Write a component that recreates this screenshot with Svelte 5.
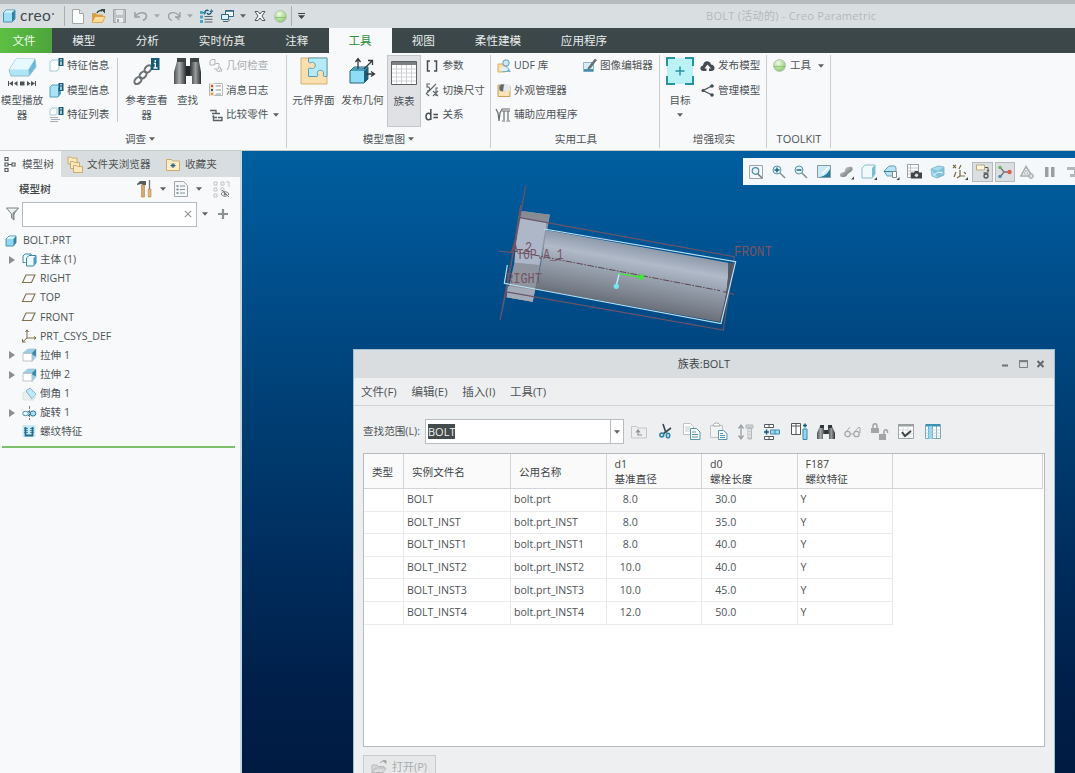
<script>
  const T = '#2b7f9c';
  // name: [width, height, svg body]
  const icons = {
    cube: [14, 14, '<path d="M1.500 3.500L4 1h9v9l-3 3H1.500z" fill="#9edff5" stroke="#4b93b0"/><path d="M2 3.500L4 1.500h8.500L10 3.500z" fill="#e0f6fd"/><path d="M10 3.500l2.800-2.300v8.600L10 12.500z" fill="#2e7fa0"/>'],
    page: [12, 15, '<path d="M.5.500h7l4 4v10H.5z" fill="#fff" stroke="#a2a7aa"/><path d="M7.500.500v4h4" fill="#e4e7e9" stroke="#a2a7aa"/>'],
    folder: [15, 15, '<path d="M1 13V4h4l1 1.500h6V13z" fill="#d9a04c"/><path d="M1 13.500L4 7.500h10l-2.500 6z" fill="#ffdc98" stroke="#d49a45" stroke-width=".8"/><path d="M6 4c1-2 3-3 5-2" fill="none" stroke="#3a4446" stroke-width="1.500"/><path d="M9.500 0H14v4.500z" fill="#3a4446"/>'],
    folderOff: [17, 14, '<path d="M1 12.500V5h5l1 1.500h6V8M1 12.500L4 8h11l-3 4.500z" fill="#d8dadb" stroke="#b6b9bb"/><path d="M9 3c1-1.500 3-2 5-1" fill="none" stroke="#aaa"/><path d="M12 .500h3v3z" fill="#999" stroke="#aaa"/>'],
    save: [13, 14, '<path d="M.5.500h12v13H.5z" fill="#bfc3c5" stroke="#9fa4a6"/><path d="M3 .800h7v5H3z" fill="#e2e5e6"/><path d="M3 9h7v4.500H3z" fill="#eef0f0"/><path d="M4 10h2v3H4z" fill="#9fa4a6"/>'],
    undo: [14, 12, '<path d="M1 2v5h5M1.500 6.500C4 2 12 1 12.500 6c0 2-1 3.500-3.500 4.500" fill="none" stroke="#9a9fa1" stroke-width="1.500"/>'],
    redo: [14, 12, '<path d="M13 2v5H8M12.500 6.500C10 2 2 1 1.500 6c0 2 1 3.500 3.500 4.500M9 7l3.500 3" fill="none" stroke="#9a9fa1" stroke-width="1.300"/>'],
    regen: [14, 14, `<path d="M5.500 7.500h8M5.500 10.300h8M5.500 13h8" stroke="#59666a"/><path d="M1 2h3v3H1zM1 6.500h3v3H1zM1 11h3v3H1z" fill="#4ba3c6"/><path d="M5.500 4C6 1 8 .500 9.500 2M8 4c1 2 4 1.500 4.500-1.500" fill="none" stroke="#174f66" stroke-width="1.300"/><path d="M10.500 3l2-3 2 3zM3.500 3h4l-2 3z" fill="${T}"/>`],
    windows: [14, 14, '<path d="M5.500 1.500h8v6h-8z" fill="#fff" stroke="#2d6a86"/><path d="M5.500 2h8" stroke="#2d6a86" stroke-width="1.500"/><path d="M1.500 5.500h7v5h-7z" fill="#dff3fb" stroke="#2d6a86"/><path d="M3 12.500h5l2-2" fill="none" stroke="#5a6265"/>'],
    closeWin: [12, 10, '<path d="M1 .500h3L6 3 8 .500h3L8 5l3 4.500H8L6 7 4 9.500H1L4 5z" fill="#f4f6f6" stroke="#53595b"/>'],
    sphere: [13, 13, '<circle cx="6.500" cy="6.500" r="6" fill="url(#sph)" stroke="#b0bbae" stroke-width=".8"/><path d="M1 7.500h11" stroke="#7fb569" stroke-width=".7"/>'],
    down: [6, 4, '<path d="M0 .300h6L3 3.800z" fill="#5c6264"/>'],
    downOff: [6, 4, '<path d="M0 .300h6L3 3.800z" fill="#a4a8aa"/>'],
    menuDown: [7, 6, '<path d="M0 0h7v1H0zM0 2.300h7L3.500 6z" fill="#3e4547"/>'],
    player: [29, 32, '<path d="M1 13L8 2h19l1 8-7 9H3z" fill="#b0e5f6" stroke="#7fb5ca" stroke-width=".8"/><path d="M1.500 12.500L8 2h18.500l-6 10.500z" fill="#e6f9fe"/><path d="M20.500 12.500L27 2.500l.5 7.500-6.500 8.500z" fill="#6fb9d5"/><path d="M0 24h1v5H0zM1 26.500L5 24v5zM6 26.500L9.500 24v5zM12 24.500h4.500v4H12zM19 24l3.500 2.500L19 29zM23 24l4 2.500-4 2.500zM27 24h1v5h-1z" fill="#4c5254"/>'],
    featInfo: [15, 15, '<path d="M1 4l2-2h7v8l-2 3H1z" fill="#fff" stroke="#a3cbdb"/><path d="M9.500 0h5v8h-5z" fill="#135c78"/><path d="M12 1v1.500M12 3.500V7" stroke="#fff" stroke-width="1.300"/>'],
    modelInfo: [15, 15, '<path d="M1 4l2-2h8v8l-2 4H1z" fill="#a9e3f8" stroke="#5aa0bb"/><path d="M9 5v9l3-3V3z" fill="#4b9ec0"/><path d="M9.500 0h5v8h-5z" fill="#135c78"/><path d="M12 1v1.500M12 3.500V7" stroke="#fff" stroke-width="1.300"/>'],
    featList: [15, 15, '<path d="M1 3l2-2h5v6l-2 1H1z" fill="#fff" stroke="#a3cbdb"/><path d="M1 10.500h8M2 12.500h9M1 14.500h8" stroke="#a5acaf"/><path d="M9.500 0h5v8h-5z" fill="#135c78"/><path d="M12 1v1.500M12 3.500V7" stroke="#fff" stroke-width="1.300"/>'],
    chain: [27, 30, '<g fill="none" stroke="#6a7073" stroke-width="2"><ellipse cx="5" cy="23.500" rx="4.200" ry="2.800" transform="rotate(-45 5 23.500)"/><ellipse cx="10" cy="18" rx="4.200" ry="2.800" transform="rotate(-45 10 18)"/><ellipse cx="15" cy="12" rx="4.200" ry="2.800" transform="rotate(-50 15 12)"/></g><path d="M18 1h8.500v12H18z" fill="#135c78"/><path d="M22.300 3v2M20.800 6.300h1.500V11M20.500 11h4" stroke="#fff" stroke-width="1.300" fill="none"/>'],
    binoc: [28, 28, '<path d="M3 4h3V2h4v2h2v6h4V4h2V2h4v2h3l2 11v12h-9v-8h-6v8H0V15z" fill="url(#bin)"/><path d="M3 1h9v4H3zM16 1h9v4h-9z" fill="#3f4446"/><path d="M12 9h4v9h-4z" fill="#26292a"/>'],
    binocS: [18, 17, '<path d="M3 3h3v1h1v3h4V4h1V3h3l3 7v6h-6v-5H6v5H0v-6z" fill="url(#bin)"/><path d="M3 2h4v3H3zM11 2h4v3h-4z" fill="#33383a"/>'],
    geomOff: [14, 14, '<g fill="none" stroke="#b3b7ba"><path d="M1 2l2-1.500h3V4L5 6H1zM5 6l2-1.500h3V8l-1 2H5M10 8l2 1-2 4-3-2M12 13l1-3"/></g>'],
    msg: [14, 14, '<path d="M.5.500h13v12H.5z" fill="#fff" stroke="#b4b9bb"/><path d="M1 0h4v13H1z" fill="#f1dfc7"/><path d="M2 2h2v2H2z" fill="#c54b3c"/><path d="M2 6h2v2H2z" fill="#245e78"/><path d="M2 10h2v2H2z" fill="#d9953d"/><path d="M6.500 3H12M6.500 7H12M6.500 11H12" stroke="#8d9497"/>'],
    compare: [14, 14, '<path d="M1 2.500h6v3h4M7 5.500H3M5 7.500L3.500 9M8 9.500H4.500v3H13V9.500H9" fill="none" stroke="#5a6063" stroke-width="1.300"/>'],
    puzzle: [28, 28, '<path d="M1 1h26v26H1z" fill="#f9dfae" stroke="#d4af72"/><path d="M8.500 1v4c1 1 2 1 3 .500 5-1.500 5 7 0 6-1-.500-3-.500-3 .500v7.500h7.500c2 0 2-1 1.500-2.500-1.500-5 7-5 6 0-.500 2 0 2.500 1 2.500h2.500V1z" fill="#b5eaf8" stroke="#5a9db5"/>'],
    publish: [27, 28, '<path d="M1 14l4-4h14v12l-4 4H1z" fill="#8edcf5" stroke="#28647d"/><path d="M1.500 14L5 10.500h13.500L15 14z" fill="#4c9dba"/><path d="M15 14l4-4v12l-4 4z" fill="#1c5f7c"/><path d="M9 12V2M6.500 5L9 1.500 11.500 5M15 12l8-8M19 3.500h4.500V8M17 17h8M22 14.500l3.500 2.500-3.500 2.500" stroke="#33393b" stroke-width="1.300" fill="none"/>'],
    grid: [26, 24, '<path d="M.5.500h25v23H.5z" fill="#fff" stroke="#5c6264"/><path d="M1 1h24v3H1z" fill="#7b8183"/><path d="M5.500 4v19M10.500 4v19M15.500 4v19M20.500 4v19M1 8h24M1 12h24M1 16h24M1 20h24" stroke="#c3c7c9" stroke-width=".8"/>'],
    brackets: [13, 12, '<path d="M4 1H1.500v10H4M8 1h2.500v10H8" fill="none" stroke="#474d4f" stroke-width="1.500"/>'],
    swap: [14, 14, '<path d="M5 1H2v3c3-1 4 4 0 4M1 11L11 1M1 10l3 3M11 13V5h2M8 8l5 5M13 8l-5 5" fill="none" stroke="#5f6668" stroke-width="1.100"/>'],
    dEq: [14, 12, '<path d="M5.800 0v11M5.800 6C5 3.500 1 3.500 1 7.500s4 4 4.800 1.500M8.500 5.500H13M8.500 8.500H13" fill="none" stroke="#474d4f" stroke-width="1.500"/>'],
    udf: [14, 14, '<path d="M1 5h7v8H1z" fill="#fbdca3" stroke="#d9b16a"/><circle cx="9" cy="4" r="3.200" fill="#cfe9f4" stroke="#5f9ab4"/><path d="M5 13l4.500-7L14 13z" fill="#7eb3ca"/><ellipse cx="7" cy="10" rx="4" ry="2" fill="#dff2fa"/>'],
    appear: [14, 14, '<path d="M1 2h4l1 1h7v10.500H1z" fill="#f5d69c" stroke="#c9a062"/><circle cx="6" cy="5" r="3.800" fill="#63696c"/><path d="M7 1.500h6v7H6z" fill="#e6e9ea"/><path d="M2 8.500h10v4.500H2z" fill="#fbe3b5"/>'],
    util: [15, 14, '<path d="M0 1l2 4 1 8 1-8 2-4M6 1h8M6 3h8M8 3v9M12 3v9M6 13h3M10.500 13H14" fill="none" stroke="#666c6f" stroke-width="1.200"/>'],
    imgEdit: [14, 14, '<path d="M.5 3.500h10v9H.5z" fill="#d5eef7" stroke="#94b6c3"/><path d="M1 10h9v2.500H1z" fill="#4a90ae"/><path d="M5 9l7-9 1.500 1-6 8-2.500 1z" fill="#6c7477" stroke="#4b5356" stroke-width=".6"/>'],
    target: [28, 28, '<path d="M1 1h26v26H1z" fill="#baf2f5"/><path d="M1 9V1h8M19 1h8v8M27 19v8h-8M9 27H1v-8" fill="none" stroke="#2694a0" stroke-width="2"/><path d="M14 9.500v9M9.500 14h9" stroke="#2694a0" stroke-width="1.500"/>'],
    cloud: [15, 12, '<path d="M3.500 11C-.5 11-.5 6 3 5.500 3.500 0 10 0 11 4.500c4 0 5 6 1 6.500H9V8.500h2L7.500 4.500 4.500 8.500h2V11z" fill="#454b4e"/>'],
    share: [13, 13, '<path d="M11 2L2 6.500 11 11" fill="none" stroke="#454b4e" stroke-width="1.200"/><circle cx="11" cy="2" r="1.800" fill="#454b4e"/><circle cx="2" cy="6.500" r="1.500" fill="#454b4e"/><circle cx="11" cy="11" r="1.800" fill="#454b4e"/>'],
    tree: [12, 17, '<path d="M1 1.500h3v3H1zM1 7h3v3H1zM1 12.500h3v3H1zM8 7h3v3H8zM4 8.500h4" fill="none" stroke="#565c5f" stroke-width="1.200"/>'],
    folders: [17, 17, '<g fill="#fde8bb" stroke="#c49c5a" stroke-width=".8"><path d="M1 1h3l1 1h5v6H1z"/><path d="M3.500 5.500h3l1 1h5v6h-9z"/><path d="M6.500 9.500h3l1 1h5v6h-9z"/></g>'],
    favs: [14, 13, '<path d="M.5 1.500h5l1 1.500h7v9.500H.5z" fill="#fdeecb" stroke="#cdaa6c"/><path d="M7 5v5M4.500 7.500h5M5.300 5.800l3.400 3.400M8.700 5.800L5.300 9.200" stroke="#1f627c"/>'],
    hammer: [15, 18, '<path d="M0 4l3-3h6v4H6L4 4 0 5z" fill="#565c5f"/><path d="M4.500 5h3v12h-3z" fill="#dfa868" stroke="#b08147" stroke-width=".6"/><path d="M12.500 0v9" stroke="#70777a" stroke-width="1.300"/><path d="M11.200 9h2.800v8h-2.800z" fill="#e8b677" stroke="#b08147" stroke-width=".6"/>'],
    listDoc: [14, 16, '<path d="M.5.500h9l4 4v11H.5z" fill="#f5f7f8" stroke="#a0a6a9"/><path d="M2.500 5h2M2.500 8.500h2M2.500 12h2" stroke="#5c7c89" stroke-width="1.500"/><path d="M6 5h5M6 8.500h5M6 12h5" stroke="#8e9497"/>'],
    treeOff: [17, 17, '<path d="M1 1h3v3H1zM1 7h3v3H1zM1 13h3v3H1zM8 1h3v3H8zM13 1h3v5M8 7h3v3H8z" fill="none" stroke="#c1c5c7"/><path d="M8 13c2-3 6-3 8 0-2 3-6 3-8 0M9 9l7 7" fill="none" stroke="#777d80"/><circle cx="12" cy="13" r="1.300" fill="#777d80"/>'],
    funnel: [13, 14, '<path d="M.500 1h12L8 7v6L5.500 11V7z" fill="#eef0f1" stroke="#7a8184"/><path d="M8 7v6l-1.500-1V6L11 2z" fill="#868d90"/>'],
    x: [8, 8, '<path d="M.800.800l6.400 6.400M7.200.800L.800 7.200" stroke="#8d9396" stroke-width="1.100"/>'],
    plus: [10, 10, '<path d="M5 0v10M0 5h10" stroke="#8a9093" stroke-width="2.200"/>'],
    expand: [6, 8, '<path d="M0 0l6 4-6 4z" fill="#8a8f91"/>'],
    part: [12, 12, '<path d="M1 4l3-3h7v6.500L8.500 11H1z" fill="#8fd6ef" stroke="#4a92ae"/><path d="M1.500 4L4 1.500h6.500L8 4z" fill="#def5fd"/><path d="M8.500 4L11 1.500v6l-2.500 3z" fill="#3384a5"/>'],
    bodies: [15, 14, '<path d="M3.500 9.500H1V3l2-2h6v1" fill="#eef9fd" stroke="#3a86a4"/><path d="M4.500 5L7 2.500h7V10l-2.500 3h-7z" fill="#eef9fd" stroke="#3a86a4"/><path d="M11.500 5L14 2.500V10l-2.500 3z" fill="#4d9fbf"/>'],
    plane: [14, 10, '<path d="M4 1h9L9.500 8.500h-9z" fill="none" stroke="#80704f" stroke-width="1.100"/>'],
    csys: [15, 14, '<path d="M5 1v8h9M5 9l-4.500 4M3.500 3L5 .800 6.500 3M12 7.500l2 1.500-2 1.500M.5 10v3h3" fill="none" stroke="#7a6b4a"/>'],
    extrude: [15, 14, '<path d="M1 5l5-4h8v8l-4 4.500V5z" fill="#9ad0e5" stroke="#a5c3cf" stroke-width=".7"/><path d="M10 5l4-4v7l-4-1z" fill="#3b88a7"/><path d="M1 5.500h9V13H1z" fill="#fff" stroke="#bcc5c9"/>'],
    chamfer: [15, 14, '<path d="M1 5h4l6 8H1z" fill="#eceff1" stroke="#d3d8da" stroke-width=".6"/><path d="M4 4l4-3 6 6-4 5z" fill="#bdeafa" stroke="#7cb4ca"/><path d="M10 12l4-5v3l-3 4z" fill="#dfe3e5"/>'],
    revolve: [15, 14, '<path d="M7.500 0v14" stroke="#7a8184" stroke-dasharray="3 1"/><ellipse cx="3.500" cy="7.500" rx="2.800" ry="2.200" fill="none" stroke="#438fac"/><ellipse cx="11" cy="7.500" rx="2.800" ry="2.600" fill="#a9def1" stroke="#2f7896"/><path d="M6 5l3 2.500-3 2.500" fill="none" stroke="#2f7896"/>'],
    thread: [14, 13, '<path d="M.500 0h13v12H.5z" fill="#cbe9f5"/><path d="M3.500 2v8.500h7V2" fill="none" stroke="#246e8c" stroke-width="1.800"/><path d="M2 3.500h4M2 5.500h4M2 7.500h4M8 3.500h4M8 5.500h4M8 7.500h4" stroke="#246e8c" stroke-width=".7"/>'],
    zoomFit: [14, 14, '<path d="M.5.500h13v13H.5z" fill="#f5f8fa" stroke="#9ea5a8"/><circle cx="6.500" cy="6" r="3.300" fill="#e5f5fb" stroke="#4f8aa6" stroke-width="1.200"/><path d="M9 9l4 4" stroke="#6c7578" stroke-width="1.500"/>'],
    zoomIn: [14, 14, '<circle cx="5" cy="5" r="4" fill="#def2fa" stroke="#5c93ac"/><path d="M5 2.500v5M2.500 5h5" stroke="#1c607d" stroke-width="1.400"/><path d="M8 8l5 5" stroke="#8a9194" stroke-width="1.600"/>'],
    zoomOut: [14, 14, '<circle cx="5" cy="5" r="4" fill="#def2fa" stroke="#5c93ac"/><path d="M2.500 5h5" stroke="#1c607d" stroke-width="1.400"/><path d="M8 8l5 5" stroke="#8a9194" stroke-width="1.600"/>'],
    repaint: [14, 13, '<path d="M.5.500h13v12H.5z" fill="#cdebf6" stroke="#829ba4"/><path d="M13 4v8H3C8 11 11 8 13 4z" fill="#2a7c9a"/><path d="M5 9l7-7" stroke="#fff" stroke-width="1.200"/>'],
    shade: [16, 16, '<path d="M1 11c0-4 5-1 5-5 0-3 4-4 7-3 2 3-1 5-3 6s-2 4-5 4c-3 0-4 0-4-2z" fill="url(#shd)"/><path d="M15 12.500v3h-3z" fill="#444"/>'],
    saved: [16, 16, '<path d="M1 4l3-3h10v9l-3 4H1z" fill="#eefafe" stroke="#8bbccf"/><path d="M11 4l3-3v9l-3 4z" fill="#7cbcd4"/><path d="M16 13v3h-3z" fill="#444"/>'],
    viewMgr: [17, 16, '<path d="M1 7l5-5h6l1 2v8H4z" fill="#b9e3f3" stroke="#6ba2b9"/><path d="M1 7.500h12" stroke="#417f99"/><path d="M9.500 7.500h4v6h-4z" fill="#fff" stroke="#7f8a8e"/><path d="M16.500 13v3h-3z" fill="#444"/>'],
    camera: [15, 15, '<path d="M.5.500h11v13H.5z" fill="#fff" stroke="#9ba1a4"/><path d="M3.500 1v12M1 4h10M1 7h10M1 10h10" stroke="#c1c5c7"/><path d="M4 8.500h3l1-1.500h3l1 1.500h3v6H4z" fill="#3f4547"/><circle cx="9.500" cy="11.200" r="1.700" fill="#ddd"/>'],
    persp: [15, 14, '<path d="M1 4l7-3 6 1v8l-7 3-5-2z" fill="#a8dbed" stroke="#8cbacb"/><path d="M1 4l7 1.500 6-3.500v8l-6 3z" fill="#6db2cc" opacity=".6"/><path d="M4 10l4-3 5 1" fill="none" stroke="#e9fbff"/>'],
    datums: [16, 16, '<path d="M1 1l3 3M4 1L1 4M9 1L7 5M4 8l-2 5M8 6v6h5M8 12l-3 2M12 8l2 2" stroke="#7c6a43" stroke-width="1.200" fill="none"/><path d="M16 13v3h-3z" fill="#444"/>'],
    annot: [15, 15, '<path d="M1.500 1h8v5h-8z" fill="#fff3d8" stroke="#b3aa8c"/><path d="M10 3.500h3v4M12 6l1 1.500L14 6" fill="none" stroke="#555"/><circle cx="11" cy="12" r="2" fill="none" stroke="#555" stroke-width="1.300"/><path d="M8.500 9h5" stroke="#555" stroke-width="1.300"/>'],
    spin: [15, 14, '<path d="M3 2l4 5-4 5M7 7h5" fill="none" stroke="#6d7477" stroke-width="1.300"/><circle cx="3" cy="2.500" r="1.800" fill="#6fb75f"/><circle cx="3" cy="11.500" r="1.800" fill="#4c92b2"/><circle cx="12.500" cy="7" r="2.200" fill="#d8604d"/>'],
    simOff: [14, 14, '<path d="M6 1.500L12 11H1z" fill="none" stroke="#a8adaf" stroke-width="1.600"/><path d="M6 5L4 9h4z" fill="none" stroke="#b5babc"/><circle cx="11" cy="11" r="2.300" fill="#ddd" stroke="#999"/>'],
    pause: [10, 10, '<path d="M0 0h3.500v10H0zM6 0h3.500v10H6z" fill="#9b9fa1"/>'],
    playOff: [12, 10, '<path d="M0 0h9c3 0 4 8 0 10H3V7h4V3H0z" fill="#b3b7b9"/>'],
    upFolder: [16, 14, '<path d="M.5 1.500h5L7 3h8.500v10H.500z" fill="#eceeef" stroke="#c3c7c9"/><path d="M11 10H7V6M5 7.500L7 5l2 2.500" fill="none" stroke="#8d9295" stroke-width="1.200"/>'],
    cut: [14, 15, '<path d="M4 0l3 9M12 4L4 10" stroke="#36474f" stroke-width="1.600"/><circle cx="2.800" cy="11" r="1.900" fill="none" stroke="#2e85a8" stroke-width="1.600"/><ellipse cx="9" cy="11.500" rx="1.700" ry="2.300" fill="none" stroke="#2e85a8" stroke-width="1.600"/>'],
    copy: [18, 17, '<path d="M.5.500h7l3 3v8H.5z" fill="#fff" stroke="#bcc1c3"/><path d="M2 4h5M2 6h6M2 8h5" stroke="#c4c8ca"/><path d="M7.500 5.500h6l3.500 3.500v7.500H7.500z" fill="#fff" stroke="#5596af"/><path d="M9 9h4M9 11.500h6M9 14h6" stroke="#5596af"/>'],
    paste: [18, 17, '<path d="M.5 2.500h12v12H.5z" fill="#f2f3f3" stroke="#c0c4c6"/><path d="M3 3c0-4 7-4 7 0z" fill="#fff" stroke="#9fa5a7"/><path d="M8.500 7.500h5l3.500 3v6H8.500z" fill="#fff" stroke="#5596af"/><path d="M10 10.500h3M10 12.500h5M10 14.500h5" stroke="#5596af"/>'],
    pattern: [17, 16, '<path d="M4 2v12M1.500 4.500L4 1l2.500 3.500M1.500 11.500L4 15l2.500-3.500" fill="none" stroke="#9a9fa1" stroke-width="1.300"/><path d="M9 1h7v3H9zM11 4h3.500v11H11z" fill="#cfd2d4" stroke="#b4b8ba"/><path d="M11 6h3M11 9h3M11 12h3" stroke="#eee"/>'],
    addRow: [17, 16, '<path d="M.5.500h9v3h-9zM5 .500v3M.5 12.500h9v3h-9zM5 12.500v3" fill="#fff" stroke="#50595c"/><path d="M6.500 6h9v4h-9zM11 6v4" fill="#9bdcf5" stroke="#3f88a6"/><path d="M0 8h5M2.500 5.500v5" stroke="#155a78" stroke-width="1.500"/>'],
    addCol: [17, 17, '<path d="M.5.500h9v11h-9zM5 .500v11M.500 3h9" fill="#fff" stroke="#50595c"/><path d="M12 6h4v10.500h-4z" fill="#8dd9f5" stroke="#3f88a6"/><path d="M12 2.500h4M14 .500v4" stroke="#155a78" stroke-width="1.400"/>'],
    glasses: [17, 12, '<path d="M2 6L6 1M10.500 6L15 1l1 1v5" fill="none" stroke="#a5aaac"/><circle cx="3.500" cy="8" r="2.700" fill="none" stroke="#a5aaac" stroke-width="1.300"/><circle cx="12.500" cy="8" r="2.700" fill="none" stroke="#a5aaac" stroke-width="1.300"/><path d="M6 8h4" stroke="#a5aaac"/>'],
    locks: [18, 17, '<path d="M0 5h8v5H0zM8 11h7v6H8z" fill="#a1a5a7"/><path d="M2 5V3c0-3 4-3 4 0v2M13 11V9c0-3 3.500-3 3.500 0v1" fill="none" stroke="#a1a5a7" stroke-width="1.500"/>'],
    verify: [16, 15, '<path d="M.5.500h15v14H.5z" fill="#fff" stroke="#a1a7a9"/><path d="M1 6h14M1 10h14M5 3v11M10 3v11" stroke="#dadddd"/><path d="M0 0h16v2.500H0z" fill="#9aa0a2"/><path d="M4 8l3 4 6-5" fill="none" stroke="#3c4345" stroke-width="2"/>'],
    table: [16, 15, '<path d="M.5.500h15v14H.5z" fill="#fff" stroke="#84a6b3"/><path d="M1 0h14v2.500H1z" fill="#3c92b4"/><path d="M3.500 2h4v13h-4z" fill="#8fdaf5"/><path d="M3.500 2v12M7.500 2v12M11.500 2v12" stroke="#5e9cb3" stroke-width=".8"/><path d="M1 6h14M1 9h14M1 12h14" stroke="#b5ced7" stroke-width=".8"/>'],
  };

  const quick = ['page', 'folder', 'save', 'undo', 'downOff', 'redo', 'downOff', 'regen', 'windows', 'down', 'closeWin', 'sphere'];
  const tabs = [['文件', 't-file'], ['模型', 't-2'], ['分析', 't-2'], ['实时仿真', 't-4'], ['注释', 't-2'], ['工具', 't-on'], ['视图', 't-2'], ['柔性建模', 't-4'], ['应用程序', 't-4']];
  const nodes = [
    ['bodies', '主体 (1)', true], ['plane', 'RIGHT'], ['plane', 'TOP'], ['plane', 'FRONT'], ['csys', 'PRT_CSYS_DEF'],
    ['extrude', '拉伸 1', true], ['extrude', '拉伸 2', true], ['chamfer', '倒角 1'], ['revolve', '旋转 1', true], ['thread', '螺纹特征'],
  ];
  const viewTools = ['zoomFit', 'zoomIn', 'zoomOut', 'repaint', 'shade', 'saved', 'viewMgr', 'camera', 'persp', 'datums', 'annot', 'spin', 'simOff', 'pause', 'playOff'];
  const dlgTools = ['upFolder', 'cut', 'copy', 'paste', 'pattern', 'addRow', 'addCol', 'binocS', 'glasses', 'locks', 'verify', 'table'];
  const dims = [['d1', '基准直径'], ['d0', '螺栓长度'], ['F187', '螺纹特征']];
  const rows = [
    ['BOLT', 'bolt.prt', '8.0', '30.0'],
    ['BOLT_INST', 'bolt.prt_INST', '8.0', '35.0'],
    ['BOLT_INST1', 'bolt.prt_INST1', '8.0', '40.0'],
    ['BOLT_INST2', 'bolt.prt_INST2', '10.0', '40.0'],
    ['BOLT_INST3', 'bolt.prt_INST3', '10.0', '45.0'],
    ['BOLT_INST4', 'bolt.prt_INST4', '12.0', '50.0'],
  ];
</script>

{#snippet icon(name)}
  <svg class="ic" width={icons[name][0]} height={icons[name][1]} viewBox="0 0 {icons[name][0]} {icons[name][1]}">{@html icons[name][2]}</svg>
{/snippet}

{#snippet big(name, label, cls = '', arrow = false)}
  <div class="big {cls}">
    <div class="bicon">{@render icon(name)}</div>
    <div class="blabel">{label}</div>
    {#if arrow}<div class="barrow">{@render icon('down')}</div>{/if}
  </div>
{/snippet}

{#snippet small(name, label, cls = '', arrow = false)}
  <div class="small {cls}">
    <span class="sicon">{@render icon(name)}</span><span>{label}</span>
    {#if arrow}<span class="sarrow">{@render icon('down')}</span>{/if}
  </div>
{/snippet}

<svg class="defs" width="0" height="0">
  <defs>
    <radialGradient id="sph" cx=".4" cy=".3" r=".8"><stop offset="0" stop-color="#effbe8" /><stop offset=".5" stop-color="#b5e09e" /><stop offset="1" stop-color="#84c069" /></radialGradient>
    <linearGradient id="bin"><stop offset="0" stop-color="#4b5052" /><stop offset=".2" stop-color="#a7abad" /><stop offset=".45" stop-color="#2c3031" /><stop offset=".6" stop-color="#35393b" /><stop offset=".8" stop-color="#999da0" /><stop offset="1" stop-color="#2b2f30" /></linearGradient>
    <linearGradient id="shd" x2="1" y2="1"><stop offset="0" stop-color="#f0f0f0" /><stop offset=".5" stop-color="#9a9ea0" /><stop offset="1" stop-color="#5c6062" /></linearGradient>
  </defs>
</svg>

<div class="app">
  <header class="titlebar">
    <div class="logo">{@render icon('cube')}<span class="brand">creo<i></i></span></div>
    <div class="quick">
      {#each quick as q}
        <span class:arr={q.startsWith('down')}>{@render icon(q)}</span>
      {/each}
    </div>
    <div class="more">{@render icon('menuDown')}</div>
    <div class="wintitle">BOLT (活动的) - Creo Parametric</div>
  </header>

  <nav class="tabs">
    {#each tabs as [t, c]}<div class={c}>{t}</div>{/each}
  </nav>

  <section class="ribbon">
    <div class="group g1">
      <div class="body">
        {@render big('player', '模型播放器', 'b44')}
        <div class="col c1">
          {@render small('featInfo', '特征信息')}
          {@render small('modelInfo', '模型信息')}
          {@render small('featList', '特征列表')}
        </div>
        <div class="vsep"></div>
        {@render big('chain', '参考查看器', 'b50')}
        {@render big('binoc', '查找', 'b33')}
        <div class="col c2">
          {@render small('geomOff', '几何检查', 'off')}
          {@render small('msg', '消息日志')}
          {@render small('compare', '比较零件', '', true)}
        </div>
      </div>
      <div class="foot">调查 {@render icon('down')}</div>
    </div>
    <div class="group g2">
      <div class="body">
        {@render big('puzzle', '元件界面', 'b48 first')}
        {@render big('publish', '发布几何', 'b50')}
        {@render big('grid', '族表', 'b34 on')}
        <div class="col c3">
          {@render small('brackets', '参数')}
          {@render small('swap', '切换尺寸')}
          {@render small('dEq', '关系')}
        </div>
      </div>
      <div class="foot">模型意图 {@render icon('down')}</div>
    </div>
    <div class="group g3">
      <div class="body">
        <div class="col c4">
          {@render small('udf', 'UDF 库')}
          {@render small('appear', '外观管理器')}
          {@render small('util', '辅助应用程序')}
        </div>
        <div class="col c5">{@render small('imgEdit', '图像编辑器')}</div>
      </div>
      <div class="foot f3">实用工具</div>
    </div>
    <div class="group g4">
      <div class="body">
        {@render big('target', '目标', 'b40', true)}
        <div class="col">
          {@render small('cloud', '发布模型')}
          {@render small('share', '管理模型')}
        </div>
      </div>
      <div class="foot f3">增强现实</div>
    </div>
    <div class="group g5">
      <div class="body"><div class="col c6">{@render small('sphere', '工具', '', true)}</div></div>
      <div class="foot kit">TOOLKIT</div>
    </div>
  </section>

  <main>
    <aside>
      <div class="ptabs">
        <div class="ptab p1">{@render icon('tree')}<span>模型树</span></div>
        <div class="ptab p2">{@render icon('folders')}<span>文件夹浏览器</span></div>
        <div class="ptab p3">{@render icon('favs')}<span>收藏夹</span></div>
      </div>
      <div class="phead">
        <b>模型树</b>
        <span class="ptools">{@render icon('hammer')}{@render icon('down')}{@render icon('listDoc')}{@render icon('down')}<span class="toff">{@render icon('treeOff')}</span></span>
      </div>
      <div class="filter">
        {@render icon('funnel')}
        <div class="fbox">{@render icon('x')}</div>
        {@render icon('down')}
        <span class="add">{@render icon('plus')}</span>
      </div>
      <div class="tree">
        <div class="node root"><span class="nicon">{@render icon('part')}</span>BOLT.PRT</div>
        {#each nodes as [i, label, open]}
          <div class="node"><span class="exp">{#if open}{@render icon('expand')}{/if}</span><span class="nicon">{@render icon(i)}</span>{label}</div>
        {/each}
      </div>
      <div class="insert"></div>
    </aside>

    <div class="view">
      <svg class="scene" width="290" height="155" viewBox="0 0 870 465">
        <defs>
          <linearGradient id="shaft" gradientUnits="userSpaceOnUse" x1="455" y1="200" x2="422" y2="385">
            <stop offset="0" stop-color="#8d98a9" /><stop offset=".25" stop-color="#b0bac9" /><stop offset=".5" stop-color="#969fac" /><stop offset=".8" stop-color="#7b828d" /><stop offset="1" stop-color="#666b74" />
          </linearGradient>
        </defs>
        <path d="M95 93L180 104L170 160L128 365L50 352L75 250L85 112Z" fill="#8d949e" />
        <path d="M85 112L170 125L148 255L73 248Z" fill="#adb7c8" />
        <path d="M73 248L148 256L128 365L50 352Z" fill="#8f959f" />
        <path d="M95 93L180 104L170 126L85 112Z" fill="#888c93" />
        <path d="M52 318L135 330L128 365L50 352Z" fill="#a3abb8" />
        <path d="M168 150L715 248C718 300 705 370 690 426L135 327C150 270 160 220 168 150Z" fill="url(#shaft)" />
        <path d="M715 248L733 250L697 425L688 424C706 370 716 310 715 248Z" fill="#54585f" />
        <g fill="none" stroke="#6a5468" stroke-width="3.500">
          <path d="M85 112L733 230L700 450L45 335" />
          <path d="M107 18L30 420L50 330L107 18M92 75L55 300" />
          <path d="M25 213L70 218M700 335L733 343" />
        </g>
        <path d="M65 212L690 332" stroke="#5b4652" stroke-width="3" stroke-dasharray="20 4 5 4" />
        <path d="M163 147L737 245L693 431L43 310L52 255" fill="none" stroke="#b8e4f5" stroke-width="3.500" />
        <path d="M388 280L379 315" stroke="#bff3ff" stroke-width="4" /><circle cx="379" cy="319" r="8" fill="#6fe6f2" />
        <path d="M386 281L450 291" stroke="#43e33b" stroke-width="4" /><circle cx="454" cy="291" r="8" fill="#3fe836" />
        <g class="dlabel">
          <text x="732" y="228" textLength="114" lengthAdjust="spacingAndGlyphs">FRONT</text>
          <text x="62" y="217" textLength="64" lengthAdjust="spacingAndGlyphs">A_2</text>
          <text x="80" y="237" textLength="140" lengthAdjust="spacingAndGlyphs">TOP.A_1</text>
          <text x="48" y="310" textLength="108" lengthAdjust="spacingAndGlyphs">RIGHT</text>
        </g>
      </svg>

      <div class="vbar">
        {#each viewTools as v}<span class:sel={v === 'annot' || v === 'spin'}>{@render icon(v)}</span>{/each}
      </div>

      <div class="dialog">
        <div class="dtitle">
          <span>族表:BOLT</span>
          <svg class="wbtn" width="46" height="12" viewBox="0 0 46 12"><path d="M1 7.500h6" stroke="#6c7274" stroke-width="2" /><path d="M18.500 2.500h8v7h-8z" fill="none" stroke="#7b8183" /><path d="M18 3.200h9" stroke="#7b8183" stroke-width="2" /><path d="M36.500 3l6 6M42.500 3l-6 6" stroke="#63696b" stroke-width="2" /></svg>
        </div>
        <div class="dmenu"><span>文件(F)</span><span>编辑(E)</span><span>插入(I)</span><span>工具(T)</span></div>
        <div class="dbar">
          <span class="dlab">查找范围(L):</span>
          <div class="combo"><mark>BOLT</mark><span class="cbtn">{@render icon('down')}</span></div>
          <div class="dtools">{#each dlgTools as d}<span>{@render icon(d)}</span>{/each}</div>
        </div>
        <div class="frame">
          <div class="tr th">
            <div>类型</div><div>实例文件名</div><div>公用名称</div>
            {#each dims as [a, b]}<div><span>{a}<br />{b}</span></div>{/each}
            <div></div>
          </div>
          {#each rows as r}
            <div class="tr">
              <div></div><div>{r[0]}</div><div>{r[1]}</div><div class="num">{r[2]}</div><div class="num">{r[3]}</div><div>Y</div>
            </div>
          {/each}
        </div>
        <div class="open">{@render icon('folderOff')}<span>打开(P)</span></div>
      </div>
    </div>
  </main>
</div>

<style>
  :global(body) { overflow: hidden; }
  .app { width: 1075px; height: 773px; overflow: hidden; display: flex; flex-direction: column; background: #f7f9fb; color: #4e5355; font: 10.6px/15px "Open Sans", "Noto Sans CJK SC", sans-serif; white-space: nowrap; }
  .app, .app * { box-sizing: border-box; }
  .ic { display: block; flex: none; overflow: visible; }
  .defs { position: absolute; }

  .titlebar { height: 28px; flex: none; display: flex; align-items: center; background: #d9dfe0; border-top: 4px solid #b7bbbd; }
  .logo { width: 65px; height: 20px; padding-left: 2px; display: flex; align-items: center; gap: 4px; border-right: 1px solid #a9afb1; }
  .brand { font: 15.5px/18px Lato, sans-serif; color: #40494c; letter-spacing: .35px; display: flex; padding-bottom: 2px; }
  .brand i { width: 2px; height: 2px; margin: 7px 0 0 1px; background: #7a8183; }
  .quick { display: flex; padding-left: 2px; width: 227px; height: 20px; border-right: 1px solid #a9afb1; }
  .quick span { width: 21px; flex: none; display: flex; align-items: center; justify-content: center; }
  .quick .arr { width: 12px; }
  .quick span:nth-child(n + 8) { position: relative; left: -1px; }
  .more { width: 18px; display: flex; justify-content: center; }
  .wintitle { margin-left: 396px; color: #b3b9bb; font-size: 11.1px; letter-spacing: .24px; margin-top: -1px; }

  .tabs { height: 25px; flex: none; display: flex; background: #3c4749; color: #e9eded; font-size: 11.6px; line-height: 25px; text-align: center; }
  .t-2 { width: 63.5px; }
  .t-4 { width: 86px; }
  .t-file { width: 52px; padding-right: 4px; background: linear-gradient(90deg, #5cc043, #4da43d); color: #f2fbef; }
  .t-on { width: 63px; background: #f7f9fb; color: #2f8d3c; }

  .ribbon { height: 98px; flex: none; display: flex; padding-top: 2px; border-bottom: 1px solid #c5cacd; }
  .group { border-right: 1px solid #c9cdd0; height: 93px; display: flex; flex-direction: column; }
  .g1 { width: 287px; }
  .g2 { width: 204px; }
  .g3 { width: 169px; }
  .g4 { width: 107px; }
  .g5 { width: 64px; }
  .body { display: flex; height: 76px; }
  .foot { display: flex; align-items: center; justify-content: center; gap: 3px; height: 16px; }
  .kit { font-size: 11px; padding-left: 1px; line-height: 14px; height: 15px; }
  .g1 .foot { padding-right: 6px; }
  .f3 { padding-left: 2px; }
  .big { display: flex; flex-direction: column; align-items: center; padding-top: 2px; height: 72px; }
  .bicon { height: 29px; display: flex; align-items: flex-start; justify-content: center; }
  .blabel { margin-top: 7px; white-space: normal; text-align: center; line-height: 14.5px; width: 44px; word-break: break-all; }
  .barrow { margin-top: 5px; }
  .b44 { width: 44px; }
  .b50, .b48 { width: 49px; }
  .b33 { width: 33px; }
  .b40 { width: 40px; }
  .first { margin-left: 2px; }
  .b34 { width: 34px; padding-top: 5px; }
  .b34 .bicon { height: 26px; }
  .on { background: #dfe1e4; border: 1px solid #c3c7ca; }
  .col { display: flex; flex-direction: column; }
  .small { display: flex; align-items: center; height: 24.5px; padding-bottom: 3px; }
  .small.off { color: #a9adb0; }
  .sicon { width: 18px; display: flex; justify-content: center; padding-right: 3px; }
  .sarrow { margin-left: 5px; }
  .c1 { margin-left: 5px; width: 68px; }
  .vsep { width: 1px; height: 64px; margin: 3px 4px 0 0; background: #c5cacd; }
  .c2 { margin-left: 4px; }
  .c3 { margin-left: 3.5px; }
  .c4 { margin-left: 5px; width: 87px; }
  .c5 { margin-left: -1px; }
  .c6 { margin-left: 5px; }
  .c6 .sarrow { margin-left: 7px; }

  main { flex: 1; display: flex; min-height: 0; }
  aside { width: 241.5px; flex: none; background: #f7f9fb; border-right: 2px solid #c3d8e3; }
  .ptabs { display: flex; height: 26px; background: #d8dedf; }
  .ptab { display: flex; align-items: center; }
  .p1 { width: 61px; background: #f7f9fb; padding-left: 4px; gap: 6px; }
  .p2 { padding-left: 6px; width: 105px; gap: 3px; }
  .p3 { gap: 5px; }
  .phead { display: flex; align-items: center; height: 24px; padding-left: 19px; }
  .phead b { font-weight: 500; color: #3d4244; width: 118px; }
  .ptools { display: flex; align-items: center; gap: 8px; }
  .toff { margin-left: 3px; }
  .filter { display: flex; align-items: center; height: 26px; padding-left: 6px; }
  .fbox { width: 175px; height: 25px; margin: 0 5px 0 3px; border: 1px solid #b5babd; background: #fff; display: flex; align-items: center; justify-content: flex-end; padding-right: 4px; }
  .add { margin-left: 10px; }
  .tree { padding-top: 4px; }
  .node { height: 19.15px; display: flex; align-items: center; padding-left: 9px; }
  .node.root { padding-left: 5px; }
  .exp { width: 13px; }
  .nicon { width: 18px; display: flex; }
  .insert { margin: 4px 5px 0 2px; height: 2px; background: #7cc067; }

  .view { flex: 1; position: relative; overflow: hidden; background: linear-gradient(#005f9f 0, #005797 10%, #004984 28%, #003c70 45%, #002c5c 67%, #001e48 88%, #001b42); }
  .scene { position: absolute; left: 248.5px; top: 29px; }
  .dlabel { font: 44px "Liberation Mono", monospace; fill: #755463; }
  .vbar { position: absolute; left: 501.5px; top: 7px; right: 0; height: 27px; background: #f4f8fa; overflow: hidden; display: flex; align-items: center; padding-left: 2px; }
  .vbar span { width: 22.6px; height: 20px; flex: none; display: flex; align-items: center; justify-content: center; }
  .vbar .sel { width: 20.6px; margin: 0 1px; background: #dcdfe1; border: 1px solid #b5babc; }

  .dialog { position: absolute; left: 111.5px; top: 198px; width: 702px; height: 440px; background: #eeeff1; border: 1px solid #9fbdd0; display: flex; flex-direction: column; }
  .dtitle { height: 28px; flex: none; background: #d9dddf; display: flex; align-items: center; justify-content: center; position: relative; font-size: 11px; line-height: 14px; padding-bottom: 1px; color: #404547; }
  .wbtn { position: absolute; right: 7px; top: 8px; }
  .dmenu { height: 28px; flex: none; display: flex; align-items: center; gap: 14.7px; padding-left: 7px; font-size: 11.5px; border-bottom: 1px solid #d2d5d7; }
  .dbar { height: 47px; flex: none; display: flex; align-items: center; padding: 4px 0 0 9px; }
  .dlab { width: 62px; }
  .combo { width: 199px; height: 25px; background: #fff; border: 1px solid #b8bdc0; display: flex; align-items: center; padding-left: 2px; }
  mark { background: #444b4d; color: #eef0f0; line-height: 15px; font-size: 11px; }
  .cbtn { margin-left: auto; width: 13px; height: 23px; border-left: 1px solid #b8bdc0; display: flex; align-items: center; justify-content: center; }
  .dtools { display: flex; align-items: center; margin-left: 1.5px; }
  .dtools span { width: 26.75px; display: flex; justify-content: center; }
  .frame { margin-left: 9px; width: 682px; height: 294px; flex: none; background: #fff; border: 1px solid #b6bbbe; }
  .tr { display: grid; grid-template-columns: 40px 107px 95.5px 95.5px 95.5px 95.5px; height: 22.6px; }
  .tr > div { border-right: 1px solid #e6e8e9; border-bottom: 1px solid #e9ebec; display: flex; align-items: center; padding-left: 3px; }
  .tr .num { padding-right: 47px; justify-content: center; padding-left: 0; }
  .tr.th { grid-template-columns: 40px 107px 95.5px 95.5px 95.5px 95.5px 150px; height: 35px; color: #3f4446; }
  .tr.th > div { background: #fafafb; border-color: #d2d5d7; padding-left: 8px; padding-top: 2px; }
  .open { margin: 8px 0 0 9px; width: 73px; height: 26px; flex: none; border: 1px solid #c9ccce; background: #e6e8e9; color: #a8acae; font-size: 11px; line-height: 14px; display: flex; align-items: center; gap: 4px; padding: 0 0 3px 7px; }
</style>
